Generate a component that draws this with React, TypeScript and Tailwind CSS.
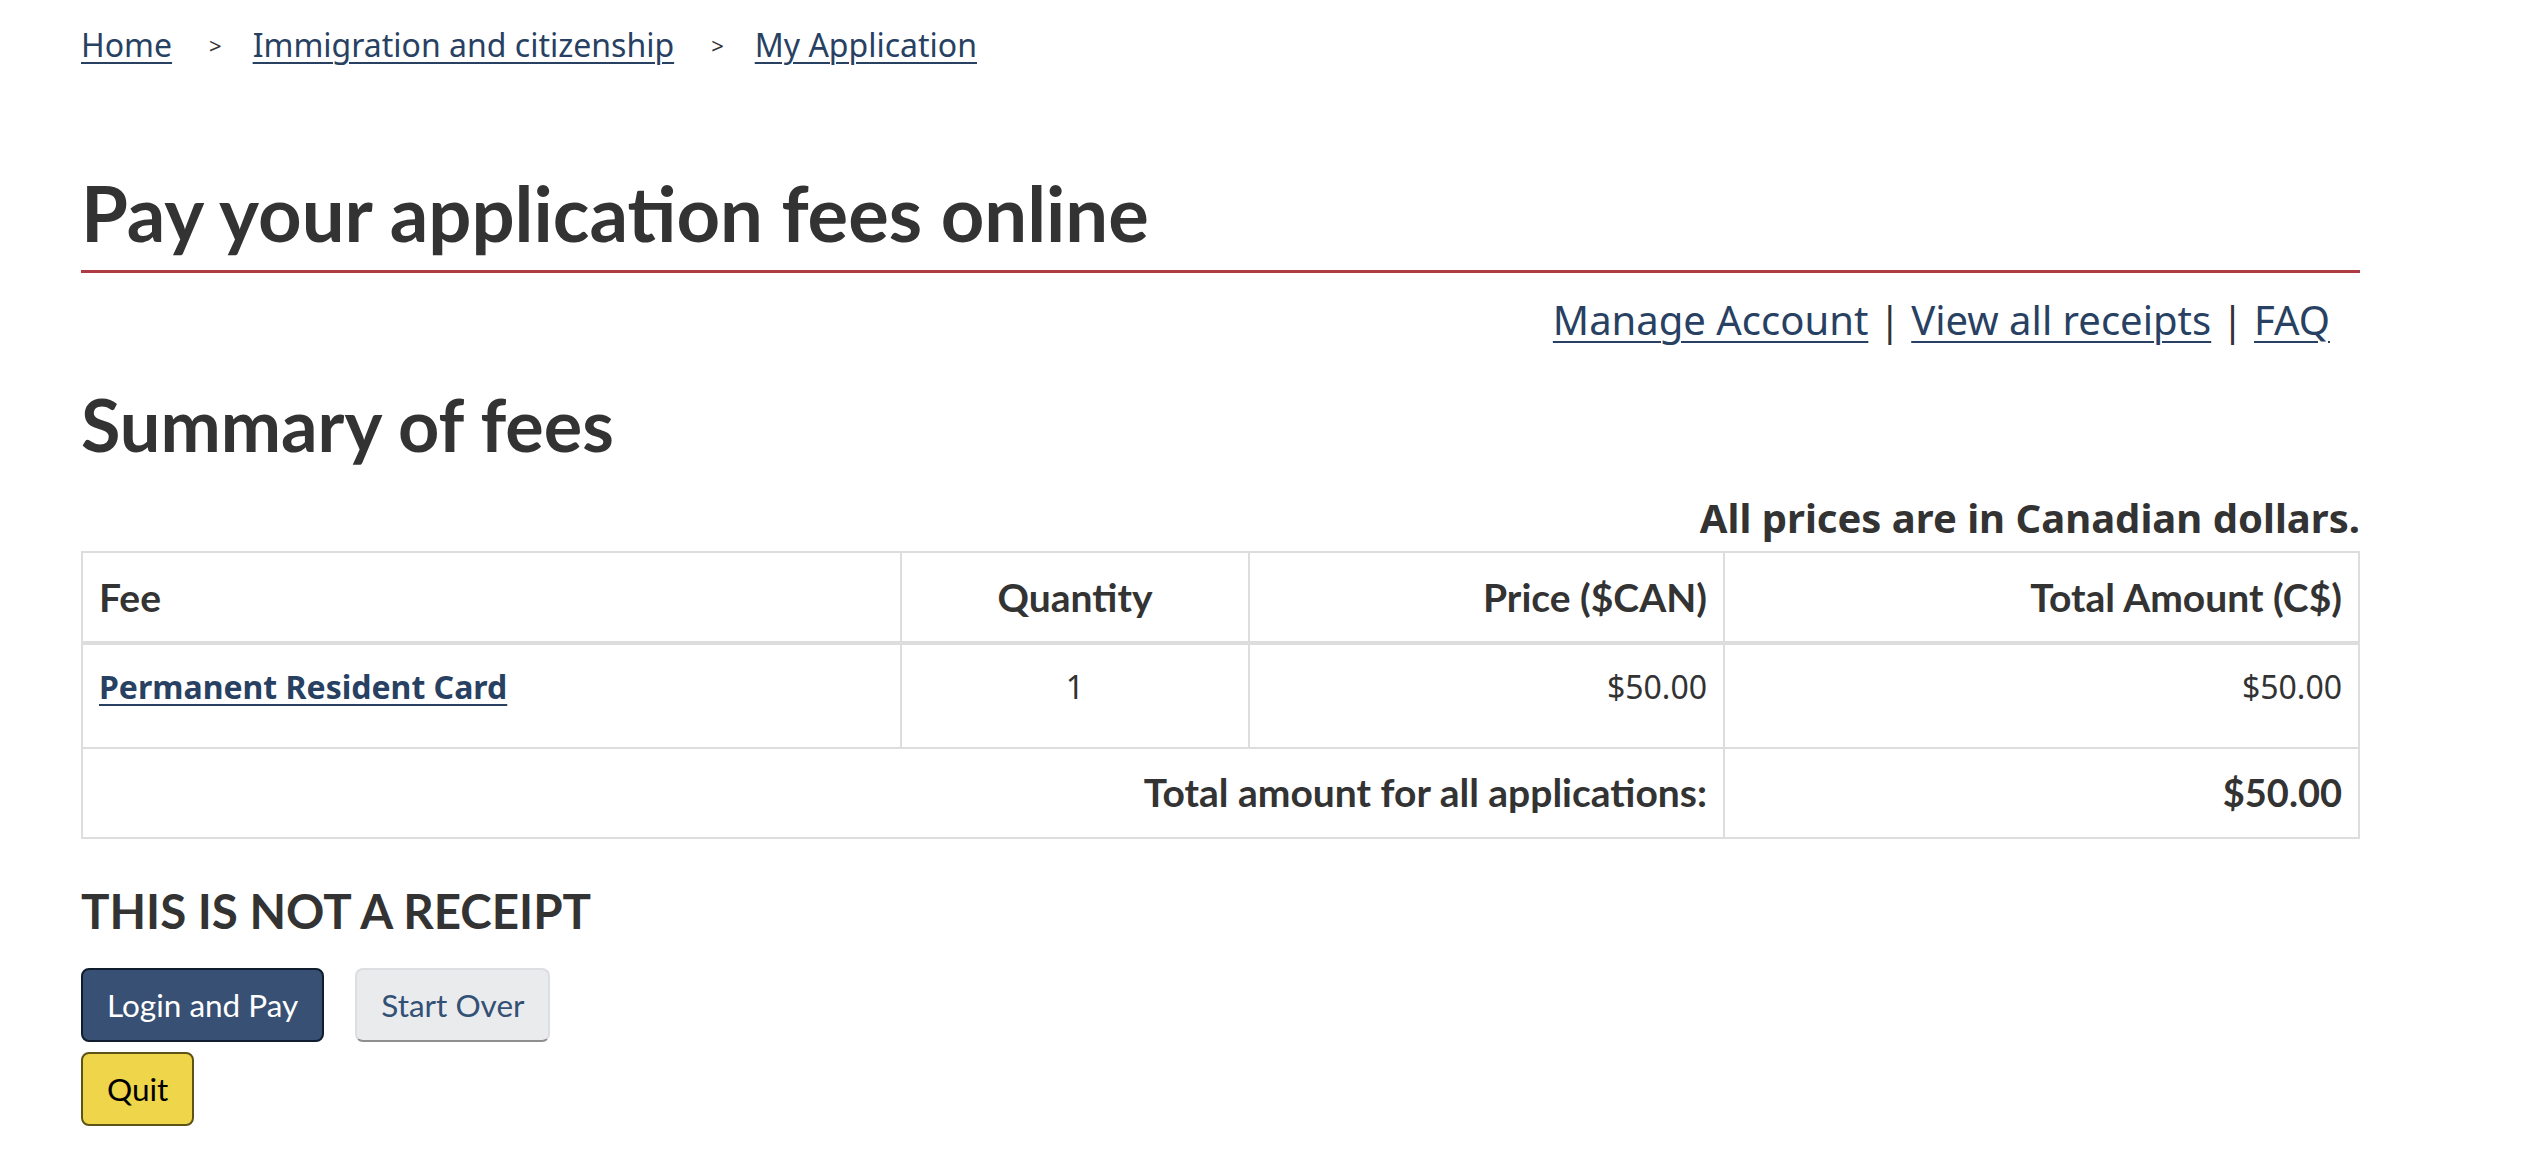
import React from 'react';

interface FeeRow {
  name: string;
  quantity: number;
  price: string;
  total: string;
}

const fees: FeeRow[] = [
  { name: 'Permanent Resident Card', quantity: 1, price: '$50.00', total: '$50.00' },
];

const crumbs = ['Home', 'Immigration and citizenship', 'My Application'];

export default function App() {
  return (
    <div className="min-h-screen bg-white font-['Noto_Sans',sans-serif] text-[#333]">
      <div className="ml-[81px] w-[2279px]">
        {/* Breadcrumbs */}
        <nav className="flex items-center pt-[22px] text-[32px] leading-[46px]">
          {crumbs.map((c, i) => (
            <React.Fragment key={c}>
              {i > 0 && (
                <span className="ml-[37px] mr-[31px] text-[22px] text-[#333]">&gt;</span>
              )}
              <a href="#" className="text-[#284162] underline decoration-2 underline-offset-[5px]">
                {c}
              </a>
            </React.Fragment>
          ))}
        </nav>

        {/* Title */}
        <h1 className="mt-[103px] border-b-[3px] border-[#af3c43] pb-[15px] font-['Lato',sans-serif] text-[76px] font-bold leading-[1.1]">
          Pay your application fees online
        </h1>

        {/* Account links */}
        <div className="mt-[18px] pr-[30px] text-right text-[40px] leading-[57px]">
          <a href="#" className="text-[#284162] underline decoration-2 underline-offset-[6px]">
            Manage Account
          </a>{' '}
          |{' '}
          <a href="#" className="text-[#284162] underline decoration-2 underline-offset-[6px]">
            View all receipts
          </a>{' '}
          |{' '}
          <a href="#" className="text-[#284162] underline decoration-2 underline-offset-[6px]">
            FAQ
          </a>
        </div>

        <h2 className="mt-[37px] font-['Lato',sans-serif] text-[72px] font-bold leading-[1.1]">
          Summary of fees
        </h2>

        <p className="mt-[25px] text-right text-[40px] font-bold leading-[57px]">
          All prices are in Canadian dollars.
        </p>

        {/* Fees table */}
        <table className="mt-[5px] w-full table-fixed border-collapse border-2 border-[#ddd]">
          <colgroup>
            <col className="w-[819px]" />
            <col className="w-[348px]" />
            <col className="w-[475px]" />
            <col />
          </colgroup>
          <thead>
            <tr className="border-b-4 border-[#ddd] font-['Lato',sans-serif] text-[39px] leading-[56px]">
              <th className="border-2 border-[#ddd] px-[16px] py-[16px] text-left font-bold">Fee</th>
              <th className="border-2 border-[#ddd] px-[16px] py-[16px] text-center font-bold">Quantity</th>
              <th className="border-2 border-[#ddd] px-[16px] py-[16px] text-right font-bold">Price ($CAN)</th>
              <th className="border-2 border-[#ddd] px-[16px] py-[16px] text-right font-bold">Total Amount (C$)</th>
            </tr>
          </thead>
          <tbody className="text-[32px] leading-[46px]">
            {fees.map((f) => (
              <tr key={f.name} className="h-[105px]">
                <td className="border-2 border-[#ddd] px-[16px] pt-[19px] pb-[36px] align-top">
                  <a href="#" className="font-bold text-[#284162] underline decoration-2 underline-offset-[5px]">
                    {f.name}
                  </a>
                </td>
                <td className="border-2 border-[#ddd] px-[16px] pt-[19px] pb-[36px] text-center align-top">{f.quantity}</td>
                <td className="border-2 border-[#ddd] px-[16px] pt-[19px] pb-[36px] text-right align-top">{f.price}</td>
                <td className="border-2 border-[#ddd] px-[16px] pt-[19px] pb-[36px] text-right align-top">{f.total}</td>
              </tr>
            ))}
            <tr className="h-[90px] font-['Lato',sans-serif] text-[39px] font-bold leading-[53px]">
              <td colSpan={3} className="border-2 border-[#ddd] px-[16px] py-[16px] text-right">
                Total amount for all applications:
              </td>
              <td className="border-2 border-[#ddd] px-[16px] py-[16px] text-right text-[38px]">$50.00</td>
            </tr>
          </tbody>
        </table>

        <h3 className="mt-[46px] font-['Lato',sans-serif] text-[47.5px] font-bold leading-[1.1]">
          THIS IS NOT A RECEIPT
        </h3>

        {/* Actions */}
        <div className="mt-[31px] flex gap-[31px] font-['Lato',sans-serif] text-[31.5px] leading-[46px]">
          <button className="rounded-[8px] border-2 border-[#0f1d2e] bg-[#385073] px-[24px] py-[12px] text-white">
            Login and Pay
          </button>
          <button className="rounded-[8px] border-2 border-[#dcdee1] border-b-[#8f8f8f] bg-[#eaebed] px-[24px] py-[12px] text-[#335075]">
            Start Over
          </button>
        </div>
        <div className="mt-[10px] font-['Lato',sans-serif] text-[31.5px] leading-[46px]">
          <button className="rounded-[8px] border-2 border-[#5e5316] bg-[#eed54a] px-[24px] py-[12px] text-black">
            Quit
          </button>
        </div>
      </div>
    </div>
  );
}
